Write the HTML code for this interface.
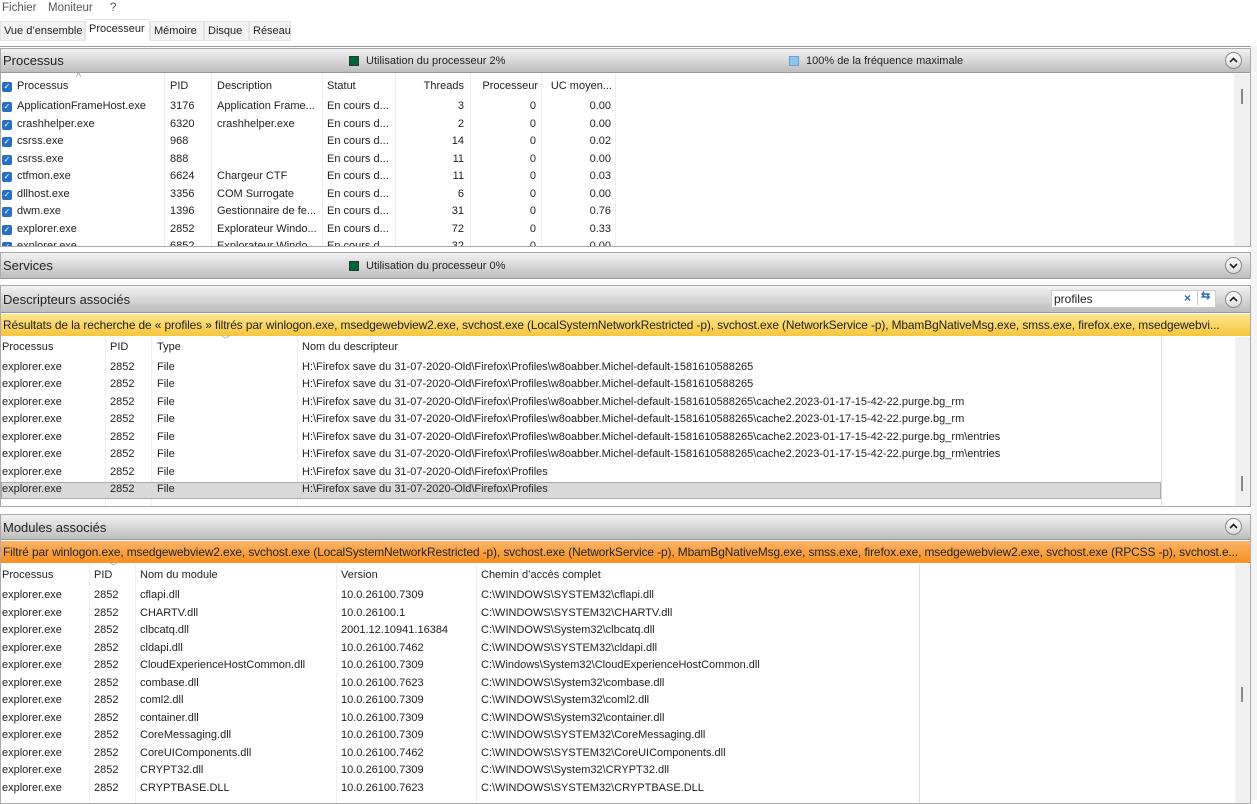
<!DOCTYPE html>
<html><head><meta charset="utf-8"><style>
*{margin:0;padding:0;box-sizing:border-box}
body{width:1257px;height:800px;overflow:hidden;background:#fff;font-family:"Liberation Sans",sans-serif;font-size:11px;color:#222;position:relative}
.a{position:absolute;white-space:nowrap}
.menu{top:2px;color:#555;font-size:11.5px}
.tab{top:21px;height:20px;border:1px solid #e4e4e4;background:#f3f3f3;padding:3px 3px 0;font-size:11px}
.panel{position:absolute;left:0;width:1251px;border:1px solid #aaa;background:#fff;overflow:hidden}
.hdr{position:absolute;left:0;right:0;top:0;height:24px;background:linear-gradient(#f2f2f2,#d8d8d8 50%,#bdbdbd);border-bottom:1px solid #999}
.hdr .t{position:absolute;left:2px;top:4px;font-size:13px;color:#222}
.chev{position:absolute;right:8px;top:3px;width:17px;height:17px;border-radius:50%;border:1px solid #888;background:linear-gradient(#fff,#ddd)}
.chev svg{position:absolute;left:3px;top:4px}
.sq{position:absolute;width:10px;height:10px;border:1px solid #333;background:#063}
.row{position:absolute;left:0;height:17px;line-height:17px}
.row span{position:absolute;white-space:nowrap}
.cb{display:inline-block;width:10px;height:10px;background:#2a6fbf;border-radius:2px;position:absolute;left:1px;top:4px;color:#fff;font-size:8px;line-height:10px;text-align:center;font-style:normal}
.div{position:absolute;width:1px;background:#eee}
.orange{position:absolute;left:0;right:0;height:22px;line-height:22px;padding-left:2px;font-size:11.9px;letter-spacing:-0.1px;overflow:hidden}
</style></head><body>
<div class="a menu" style="left:2px">Fichier</div>
<div class="a menu" style="left:48px">Moniteur</div>
<div class="a menu" style="left:110px">?</div>
<div class="a tab" style="left:0;width:85px">Vue d’ensemble</div>
<div class="a tab" style="left:85px;width:65px;background:#fff;border-bottom-color:#fff;top:19px;height:22px;padding-top:3px">Processeur</div>
<div class="a tab" style="left:150px;width:54px">Mémoire</div>
<div class="a tab" style="left:204px;width:45px">Disque</div>
<div class="a tab" style="left:249px;width:42px">Réseau</div>
<div class="a" style="left:0;top:46px;width:1257px;height:1px;background:#999"></div>
<div class="a" style="left:1251px;top:46px;width:6px;height:754px;background:#f4f4f4"></div>

<div class="panel" style="top:48px;height:199px">
 <div class="hdr"><div class="t">Processus</div>
  <div class="sq" style="left:348px;top:7px"></div><div class="a" style="left:365px;top:6px">Utilisation du processeur 2%</div>
  <div class="sq" style="left:788px;top:7px;background:#8cc4f4;border-color:#6a9fd0"></div><div class="a" style="left:805px;top:6px">100% de la fréquence maximale</div>
  <div class="chev"><svg width="9" height="7"><polyline points="1,5 4.5,1.5 8,5" fill="none" stroke="#222" stroke-width="1.6"/></svg></div></div>
 <div class="a" style="left:1233px;top:25px;width:16px;height:174px;background:#f0f0f0"></div>
 <div class="a" style="left:1240px;top:40px;width:2px;height:15px;background:#888"></div>
 <div class="div" style="left:163px;top:25px;height:174px"></div><div class="div" style="left:210px;top:25px;height:174px"></div><div class="div" style="left:321px;top:25px;height:174px"></div><div class="div" style="left:394px;top:25px;height:174px"></div><div class="div" style="left:469px;top:25px;height:174px"></div><div class="div" style="left:540px;top:25px;height:174px"></div><div class="div" style="left:614px;top:25px;height:174px"></div>
 <div class="row" style="top:29px;width:620px"><i class="cb">✓</i><span style="left:16px">Processus</span><span style="left:75px;top:-9px;color:#999">^</span><span style="left:169px">PID</span><span style="left:216px">Description</span><span style="left:326px">Statut</span><span style="right:157px">Threads</span><span style="right:83px">Processeur</span><span style="right:9px">UC moyen...</span></div>
 <div class="row" style="top:49px;width:620px"><i class="cb">✓</i><span style="left:16px">ApplicationFrameHost.exe</span><span style="left:169px">3176</span><span style="left:216px">Application Frame...</span><span style="left:326px">En cours d...</span><span style="right:157px">3</span><span style="right:85px">0</span><span style="right:10px">0.00</span></div>
 <div class="row" style="top:67px;width:620px"><i class="cb">✓</i><span style="left:16px">crashhelper.exe</span><span style="left:169px">6320</span><span style="left:216px">crashhelper.exe</span><span style="left:326px">En cours d...</span><span style="right:157px">2</span><span style="right:85px">0</span><span style="right:10px">0.00</span></div>
 <div class="row" style="top:84px;width:620px"><i class="cb">✓</i><span style="left:16px">csrss.exe</span><span style="left:169px">968</span><span style="left:326px">En cours d...</span><span style="right:157px">14</span><span style="right:85px">0</span><span style="right:10px">0.02</span></div>
 <div class="row" style="top:102px;width:620px"><i class="cb">✓</i><span style="left:16px">csrss.exe</span><span style="left:169px">888</span><span style="left:326px">En cours d...</span><span style="right:157px">11</span><span style="right:85px">0</span><span style="right:10px">0.00</span></div>
 <div class="row" style="top:119px;width:620px"><i class="cb">✓</i><span style="left:16px">ctfmon.exe</span><span style="left:169px">6624</span><span style="left:216px">Chargeur CTF</span><span style="left:326px">En cours d...</span><span style="right:157px">11</span><span style="right:85px">0</span><span style="right:10px">0.03</span></div>
 <div class="row" style="top:137px;width:620px"><i class="cb">✓</i><span style="left:16px">dllhost.exe</span><span style="left:169px">3356</span><span style="left:216px">COM Surrogate</span><span style="left:326px">En cours d...</span><span style="right:157px">6</span><span style="right:85px">0</span><span style="right:10px">0.00</span></div>
 <div class="row" style="top:154px;width:620px"><i class="cb">✓</i><span style="left:16px">dwm.exe</span><span style="left:169px">1396</span><span style="left:216px">Gestionnaire de fe...</span><span style="left:326px">En cours d...</span><span style="right:157px">31</span><span style="right:85px">0</span><span style="right:10px">0.76</span></div>
 <div class="row" style="top:172px;width:620px"><i class="cb">✓</i><span style="left:16px">explorer.exe</span><span style="left:169px">2852</span><span style="left:216px">Explorateur Windo...</span><span style="left:326px">En cours d...</span><span style="right:157px">72</span><span style="right:85px">0</span><span style="right:10px">0.33</span></div>
 <div class="row" style="top:189px;width:620px"><i class="cb">✓</i><span style="left:16px">explorer.exe</span><span style="left:169px">6852</span><span style="left:216px">Explorateur Windo...</span><span style="left:326px">En cours d...</span><span style="right:157px">32</span><span style="right:85px">0</span><span style="right:10px">0.00</span></div>
</div>

<div class="panel" style="top:252px;height:27px;border-bottom:none">
 <div class="hdr" style="height:26px"><div class="t" style="top:5px">Services</div>
  <div class="sq" style="left:348px;top:8px"></div><div class="a" style="left:365px;top:7px">Utilisation du processeur 0%</div>
  <div class="chev" style="top:4px"><svg width="9" height="7"><polyline points="1,2 4.5,5.5 8,2" fill="none" stroke="#222" stroke-width="1.6"/></svg></div></div>
</div>

<div class="panel" style="top:285px;height:222px">
 <div class="hdr" style="height:27px"><div class="t" style="top:6px">Descripteurs associés</div>
  <div class="a" style="left:1050px;top:4px;width:165px;height:18px;background:#fff;border:1px solid #ccc"></div>
  <div class="a" style="left:1053px;top:6px;font-size:12px">profiles</div>
  <div class="a" style="left:1183px;top:5px;color:#2a6fbf;font-size:12px;font-weight:bold">×</div>
  <div class="a" style="left:1196px;top:5px;width:1px;height:14px;background:#ccc"></div>
  <div class="a" style="left:1200px;top:3px;color:#2a6fbf;font-size:11px;font-weight:bold">⇆</div>
  <div class="chev" style="top:5px"><svg width="9" height="7"><polyline points="1,5 4.5,1.5 8,5" fill="none" stroke="#222" stroke-width="1.6"/></svg></div></div>
 <div class="orange" style="top:28px;background:linear-gradient(#fde68f,#f6c63c)">Résultats de la recherche de « profiles » filtrés par winlogon.exe, msedgewebview2.exe, svchost.exe (LocalSystemNetworkRestricted -p), svchost.exe (NetworkService -p), MbamBgNativeMsg.exe, smss.exe, firefox.exe, msedgewebvi...</div>
 <div class="a" style="left:1160px;top:51px;width:1px;height:170px;background:#ddd"></div>
 <div class="a" style="left:1234px;top:51px;width:16px;height:170px;background:#f0f0f0"></div>
 <div class="a" style="left:1240px;top:190px;width:2px;height:15px;background:#888"></div>
 <div class="div" style="left:104px;top:51px;height:170px"></div><div class="div" style="left:150px;top:51px;height:170px"></div><div class="div" style="left:296px;top:51px;height:170px"></div>
 <div class="a" style="left:0;top:196px;width:1160px;height:17px;background:#d9d9d9;border:1px solid #aaa"></div>
 <div class="a" style="left:220px;top:47px;color:#999;font-size:9px">﹀</div>
</div>

<div class="panel" style="top:514px;height:290px">
 <div class="hdr" style="height:25px"><div class="t" style="top:5px">Modules associés</div><div class="chev"><svg width="9" height="7"><polyline points="1,5 4.5,1.5 8,5" fill="none" stroke="#222" stroke-width="1.6"/></svg></div></div>
 <div class="orange" style="top:26px;background:linear-gradient(#fbb468,#f78f1e)">Filtré par winlogon.exe, msedgewebview2.exe, svchost.exe (LocalSystemNetworkRestricted -p), svchost.exe (NetworkService -p), MbamBgNativeMsg.exe, smss.exe, firefox.exe, msedgewebview2.exe, svchost.exe (RPCSS -p), svchost.e...</div>
 <div class="a" style="left:918px;top:49px;width:1px;height:240px;background:#ddd"></div>
 <div class="a" style="left:1234px;top:49px;width:16px;height:240px;background:#f0f0f0"></div>
 <div class="a" style="left:1240px;top:172px;width:2px;height:15px;background:#888"></div>
 <div class="div" style="left:88px;top:49px;height:240px"></div><div class="div" style="left:134px;top:49px;height:240px"></div><div class="div" style="left:335px;top:49px;height:240px"></div><div class="div" style="left:475px;top:49px;height:240px"></div>
 <div class="a" style="left:108px;top:45px;color:#999;font-size:9px">﹀</div>
</div>

<div class="a" style="left:0;top:339px;width:1160px">
<div class="row" style="top:0"><span style="left:2px">Processus</span><span style="left:110px">PID</span><span style="left:157px">Type</span><span style="left:302px">Nom du descripteur</span></div>
<div class="row" style="top:20px"><span style="left:2px">explorer.exe</span><span style="left:110px">2852</span><span style="left:157px">File</span><span style="left:302px">H:\Firefox save du 31-07-2020-Old\Firefox\Profiles\w8oabber.Michel-default-1581610588265</span></div>
<div class="row" style="top:37px"><span style="left:2px">explorer.exe</span><span style="left:110px">2852</span><span style="left:157px">File</span><span style="left:302px">H:\Firefox save du 31-07-2020-Old\Firefox\Profiles\w8oabber.Michel-default-1581610588265</span></div>
<div class="row" style="top:55px"><span style="left:2px">explorer.exe</span><span style="left:110px">2852</span><span style="left:157px">File</span><span style="left:302px">H:\Firefox save du 31-07-2020-Old\Firefox\Profiles\w8oabber.Michel-default-1581610588265\cache2.2023-01-17-15-42-22.purge.bg_rm</span></div>
<div class="row" style="top:72px"><span style="left:2px">explorer.exe</span><span style="left:110px">2852</span><span style="left:157px">File</span><span style="left:302px">H:\Firefox save du 31-07-2020-Old\Firefox\Profiles\w8oabber.Michel-default-1581610588265\cache2.2023-01-17-15-42-22.purge.bg_rm</span></div>
<div class="row" style="top:90px"><span style="left:2px">explorer.exe</span><span style="left:110px">2852</span><span style="left:157px">File</span><span style="left:302px">H:\Firefox save du 31-07-2020-Old\Firefox\Profiles\w8oabber.Michel-default-1581610588265\cache2.2023-01-17-15-42-22.purge.bg_rm\entries</span></div>
<div class="row" style="top:107px"><span style="left:2px">explorer.exe</span><span style="left:110px">2852</span><span style="left:157px">File</span><span style="left:302px">H:\Firefox save du 31-07-2020-Old\Firefox\Profiles\w8oabber.Michel-default-1581610588265\cache2.2023-01-17-15-42-22.purge.bg_rm\entries</span></div>
<div class="row" style="top:125px"><span style="left:2px">explorer.exe</span><span style="left:110px">2852</span><span style="left:157px">File</span><span style="left:302px">H:\Firefox save du 31-07-2020-Old\Firefox\Profiles</span></div>
<div class="row" style="top:142px"><span style="left:2px">explorer.exe</span><span style="left:110px">2852</span><span style="left:157px">File</span><span style="left:302px">H:\Firefox save du 31-07-2020-Old\Firefox\Profiles</span></div>
</div>

<div class="a" style="left:0;top:567px;width:918px">
<div class="row" style="top:0"><span style="left:2px">Processus</span><span style="left:94px">PID</span><span style="left:140px">Nom du module</span><span style="left:341px">Version</span><span style="left:481px">Chemin d’accès complet</span></div>
<div class="row" style="top:20px"><span style="left:2px">explorer.exe</span><span style="left:94px">2852</span><span style="left:140px">cflapi.dll</span><span style="left:341px">10.0.26100.7309</span><span style="left:481px">C:\WINDOWS\SYSTEM32\cflapi.dll</span></div>
<div class="row" style="top:38px"><span style="left:2px">explorer.exe</span><span style="left:94px">2852</span><span style="left:140px">CHARTV.dll</span><span style="left:341px">10.0.26100.1</span><span style="left:481px">C:\WINDOWS\SYSTEM32\CHARTV.dll</span></div>
<div class="row" style="top:55px"><span style="left:2px">explorer.exe</span><span style="left:94px">2852</span><span style="left:140px">clbcatq.dll</span><span style="left:341px">2001.12.10941.16384</span><span style="left:481px">C:\WINDOWS\System32\clbcatq.dll</span></div>
<div class="row" style="top:73px"><span style="left:2px">explorer.exe</span><span style="left:94px">2852</span><span style="left:140px">cldapi.dll</span><span style="left:341px">10.0.26100.7462</span><span style="left:481px">C:\WINDOWS\SYSTEM32\cldapi.dll</span></div>
<div class="row" style="top:90px"><span style="left:2px">explorer.exe</span><span style="left:94px">2852</span><span style="left:140px">CloudExperienceHostCommon.dll</span><span style="left:341px">10.0.26100.7309</span><span style="left:481px">C:\Windows\System32\CloudExperienceHostCommon.dll</span></div>
<div class="row" style="top:108px"><span style="left:2px">explorer.exe</span><span style="left:94px">2852</span><span style="left:140px">combase.dll</span><span style="left:341px">10.0.26100.7623</span><span style="left:481px">C:\WINDOWS\System32\combase.dll</span></div>
<div class="row" style="top:125px"><span style="left:2px">explorer.exe</span><span style="left:94px">2852</span><span style="left:140px">coml2.dll</span><span style="left:341px">10.0.26100.7309</span><span style="left:481px">C:\WINDOWS\System32\coml2.dll</span></div>
<div class="row" style="top:143px"><span style="left:2px">explorer.exe</span><span style="left:94px">2852</span><span style="left:140px">container.dll</span><span style="left:341px">10.0.26100.7309</span><span style="left:481px">C:\WINDOWS\System32\container.dll</span></div>
<div class="row" style="top:160px"><span style="left:2px">explorer.exe</span><span style="left:94px">2852</span><span style="left:140px">CoreMessaging.dll</span><span style="left:341px">10.0.26100.7309</span><span style="left:481px">C:\WINDOWS\SYSTEM32\CoreMessaging.dll</span></div>
<div class="row" style="top:178px"><span style="left:2px">explorer.exe</span><span style="left:94px">2852</span><span style="left:140px">CoreUIComponents.dll</span><span style="left:341px">10.0.26100.7462</span><span style="left:481px">C:\WINDOWS\SYSTEM32\CoreUIComponents.dll</span></div>
<div class="row" style="top:195px"><span style="left:2px">explorer.exe</span><span style="left:94px">2852</span><span style="left:140px">CRYPT32.dll</span><span style="left:341px">10.0.26100.7309</span><span style="left:481px">C:\WINDOWS\System32\CRYPT32.dll</span></div>
<div class="row" style="top:213px"><span style="left:2px">explorer.exe</span><span style="left:94px">2852</span><span style="left:140px">CRYPTBASE.DLL</span><span style="left:341px">10.0.26100.7623</span><span style="left:481px">C:\WINDOWS\SYSTEM32\CRYPTBASE.DLL</span></div>
</div>
</body></html>
